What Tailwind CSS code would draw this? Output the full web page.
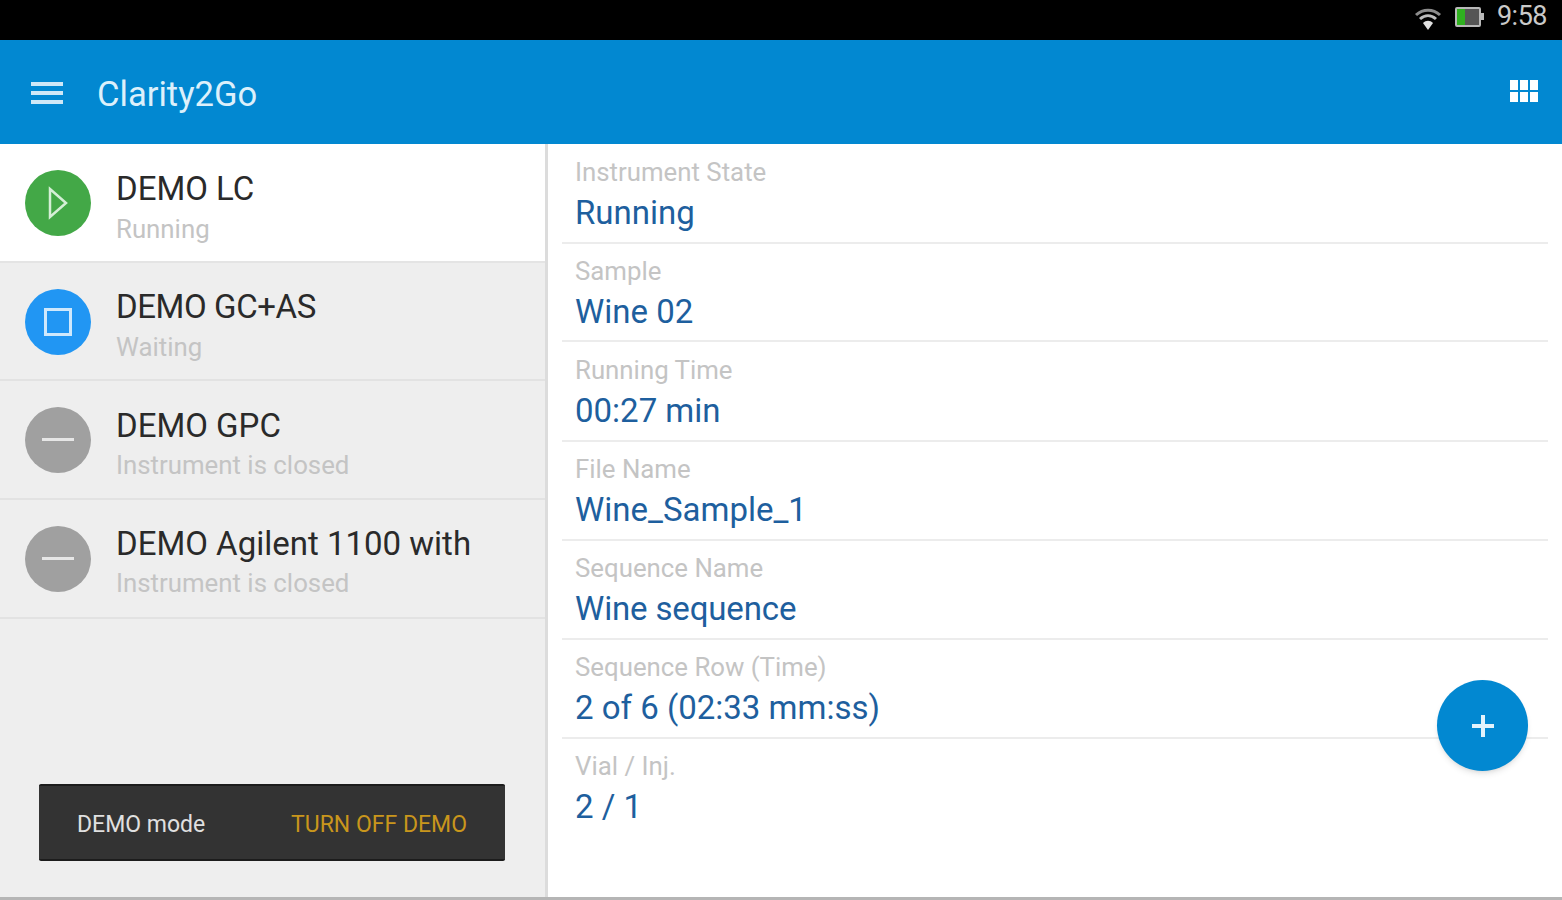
<!DOCTYPE html>
<html lang="en">

<head>
    <meta charset="UTF-8">
    <title>Clarity2Go</title>
    <script src="https://cdn.jsdelivr.net/npm/@tailwindcss/browser@4"></script>
</head>

<body class="bg-white font-['Roboto',sans-serif]">
<div class="w-[1562px] h-[900px] overflow-hidden flex flex-col">
    <!-- Status bar -->
    <div class="h-[40px] bg-black flex items-center justify-end pr-[15px] pb-[7px] gap-[13px] shrink-0">
        <svg width="28" height="24" viewBox="0 0 28 24" class="mt-[4px]">
            <path d="M2 8 C9 1.5 19 1.5 26 8" fill="none" stroke="#8c8c8c" stroke-width="3"/>
            <path d="M6 12 C11 7.5 17 7.5 22 12" fill="none" stroke="#bdbdbd" stroke-width="3"/>
            <path d="M9 16 C12 13 16 13 19 16 L14 23 Z" fill="#e0e0e0"/>
        </svg>
        <div class="flex items-center">
            <div class="w-[26px] h-[20px] border-2 border-[#b8b8b8] bg-[#555] rounded-[2px]">
                <div class="w-[8px] h-full bg-[#2fb01f]"></div>
            </div>
            <div class="w-[3px] h-[7px] bg-[#b8b8b8]"></div>
        </div>
        <span class="text-[27px] leading-none text-[#c9c9c9] tracking-[-0.5px]">9:58</span>
    </div>

    <!-- App bar -->
    <div class="h-[104px] bg-[#0288d1] flex items-center pl-[31px] pr-[24px] shrink-0">
        <div class="w-[32px] flex flex-col gap-[5px] mt-[2px]">
            <div class="h-[4px] bg-[#cfe8f7]"></div>
            <div class="h-[4px] bg-[#cfe8f7]"></div>
            <div class="h-[4px] bg-[#cfe8f7]"></div>
        </div>
        <span class="ml-[34px] text-[34.6px] leading-none text-[#dcf0fb] mt-[5px]">Clarity2Go</span>
        <div class="ml-auto grid grid-cols-3 gap-[2px] w-[28px] mb-[2px]">
            <div class="h-[10px] bg-white"></div>
            <div class="h-[10px] bg-white"></div>
            <div class="h-[10px] bg-white"></div>
            <div class="h-[10px] bg-white"></div>
            <div class="h-[10px] bg-white"></div>
            <div class="h-[10px] bg-white"></div>
        </div>
    </div>

    <div class="flex flex-1 min-h-0 border-b-[3px] border-[#b5b5b5]">
        <!-- Instruments -->
        <div class="w-[548px] shrink-0 bg-[#eeeeee] border-r-[3px] border-[#dcdcdc] flex flex-col">
            <div class="h-[119px] bg-white border-b-2 border-[#e4e4e4] flex items-center pl-[25px]">
                <div class="w-[66px] h-[66px] rounded-full bg-[#43a847] flex items-center justify-center">
                    <svg width="22" height="34" viewBox="0 0 22 34"><path d="M3 3 L19 17 L3 31 Z" fill="none" stroke="#d5efd6" stroke-width="2.5"/></svg>
                </div>
                <div class="ml-[26px] pt-[8px]">
                    <div class="text-[33px] leading-[38px] text-[#2a2a2a] -ml-[1px]">DEMO LC</div>
                    <div class="text-[25.8px] leading-[30px] mt-[6px] text-[#c4c4c4] -ml-[1px]">Running</div>
                </div>
            </div>
            <div class="h-[118px] border-b-2 border-[#e2e2e2] flex items-center pl-[25px]">
                <div class="w-[66px] h-[66px] mt-[2px] rounded-full bg-[#2196f3] flex items-center justify-center">
                    <div class="w-[28px] h-[28px] border-[3px] border-[#cfe8fc]"></div>
                </div>
                <div class="ml-[26px] pt-[8px]">
                    <div class="text-[33px] leading-[38px] text-[#2a2a2a] -ml-[1px] tracking-[-0.4px]">DEMO GC+AS</div>
                    <div class="text-[25.8px] leading-[30px] mt-[6px] text-[#c4c4c4] -ml-[1px]">Waiting</div>
                </div>
            </div>
            <div class="h-[119px] border-b-2 border-[#e2e2e2] flex items-center pl-[25px]">
                <div class="w-[66px] h-[66px] rounded-full bg-[#a0a0a0] flex items-center justify-center">
                    <div class="w-[32px] h-[3px] bg-[#e6e6e6]"></div>
                </div>
                <div class="ml-[26px] pt-[8px]">
                    <div class="text-[33px] leading-[38px] text-[#2a2a2a] -ml-[1px]">DEMO GPC</div>
                    <div class="text-[25.8px] leading-[30px] mt-[5px] text-[#c4c4c4] -ml-[1px]">Instrument is closed</div>
                </div>
            </div>
            <div class="h-[119px] border-b-2 border-[#e2e2e2] flex items-center pl-[25px]">
                <div class="w-[66px] h-[66px] rounded-full bg-[#a0a0a0] flex items-center justify-center">
                    <div class="w-[32px] h-[3px] bg-[#e6e6e6]"></div>
                </div>
                <div class="ml-[26px] pt-[6px]">
                    <div class="text-[33px] leading-[38px] text-[#2a2a2a] -ml-[1px]">DEMO Agilent 1100 with</div>
                    <div class="text-[25.8px] leading-[30px] mt-[5px] text-[#c4c4c4] -ml-[1px]">Instrument is closed</div>
                </div>
            </div>

            <!-- Demo mode bar -->
            <div class="mt-auto mb-[36px] ml-[39px] w-[466px] h-[77px] bg-[#333333] border-y-2 border-[#1c1c1c] rounded-[2px] flex items-center justify-between pl-[38px] pr-[38px] pt-[5px] text-[23px]">
                <span class="text-[#e0e0e0]">DEMO mode</span>
                <span class="text-[#c9961c]">TURN OFF DEMO</span>
            </div>
        </div>

        <!-- Details -->
        <div class="relative flex-1 pl-[14px] pr-[14px]">
            <div class="h-[100px] border-b-2 border-[#ececec] pl-[13px] pt-[13px]">
                <div class="text-[25.8px] leading-[30px] text-[#c4c4c4]">Instrument State</div>
                <div class="text-[33px] leading-[40px] mt-[6px] text-[#1e5f9e]">Running</div>
            </div>
            <div class="h-[98px] border-b-2 border-[#ececec] pl-[13px] pt-[12px]">
                <div class="text-[25.8px] leading-[30px] text-[#c4c4c4]">Sample</div>
                <div class="text-[33px] leading-[40px] mt-[6px] text-[#1e5f9e]">Wine 02</div>
            </div>
            <div class="h-[100px] border-b-2 border-[#ececec] pl-[13px] pt-[13px]">
                <div class="text-[25.8px] leading-[30px] text-[#c4c4c4]">Running Time</div>
                <div class="text-[33px] leading-[40px] mt-[6px] text-[#1e5f9e]">00:27 min</div>
            </div>
            <div class="h-[99px] border-b-2 border-[#ececec] pl-[13px] pt-[12px]">
                <div class="text-[25.8px] leading-[30px] text-[#c4c4c4]">File Name</div>
                <div class="text-[33px] leading-[40px] mt-[6px] text-[#1e5f9e]">Wine_Sample_1</div>
            </div>
            <div class="h-[99px] border-b-2 border-[#ececec] pl-[13px] pt-[12px]">
                <div class="text-[25.8px] leading-[30px] text-[#c4c4c4]">Sequence Name</div>
                <div class="text-[33px] leading-[40px] mt-[6px] text-[#1e5f9e] tracking-[-0.15px]">Wine sequence</div>
            </div>
            <div class="h-[99px] border-b-2 border-[#ececec] pl-[13px] pt-[12px]">
                <div class="text-[25.8px] leading-[30px] text-[#c4c4c4]">Sequence Row (Time)</div>
                <div class="text-[33px] leading-[40px] mt-[6px] text-[#1e5f9e]">2 of 6 (02:33 mm:ss)</div>
            </div>
            <div class="pl-[13px] pt-[12px]">
                <div class="text-[25.8px] leading-[30px] text-[#c4c4c4]">Vial / Inj.</div>
                <div class="text-[33px] leading-[40px] mt-[6px] text-[#1e5f9e]">2 / 1</div>
            </div>

            <!-- Floating add button -->
            <div class="absolute left-[889px] top-[536px] w-[91px] h-[91px] rounded-full bg-[#0288d1] shadow-md flex items-center justify-center">
                <svg width="24" height="24" viewBox="0 0 24 24"><path d="M12 1 V23 M1 12 H23" stroke="#e3f3fc" stroke-width="4"/></svg>
            </div>
        </div>
    </div>
</div>
</body>

</html>
